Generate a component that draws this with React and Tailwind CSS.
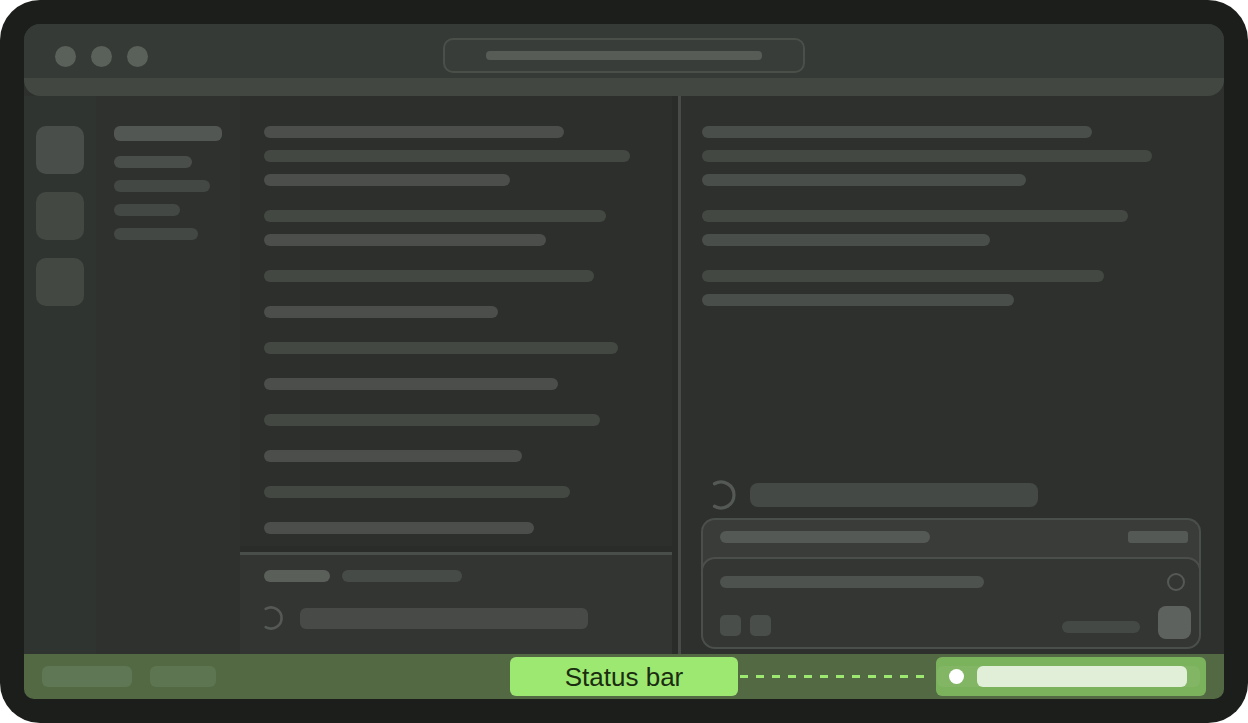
import React from 'react';

// Placeholder text lines in the editor and the preview pane
const editorLines = [
  { w: 'w-[300px]', c: 'bg-[#4b4e4b]', mt: 'mt-0' },
  { w: 'w-[366px]', c: 'bg-[#434843]', mt: 'mt-3' },
  { w: 'w-[246px]', c: 'bg-[#4b4e4b]', mt: 'mt-3' },
  { w: 'w-[342px]', c: 'bg-[#434843]', mt: 'mt-6' },
  { w: 'w-[282px]', c: 'bg-[#4b4e4b]', mt: 'mt-3' },
  { w: 'w-[330px]', c: 'bg-[#434843]', mt: 'mt-6' },
  { w: 'w-[234px]', c: 'bg-[#4b4e4b]', mt: 'mt-6' },
  { w: 'w-[354px]', c: 'bg-[#434843]', mt: 'mt-6' },
  { w: 'w-[294px]', c: 'bg-[#4b4e4b]', mt: 'mt-6' },
  { w: 'w-[336px]', c: 'bg-[#434843]', mt: 'mt-6' },
  { w: 'w-[258px]', c: 'bg-[#4b4e4b]', mt: 'mt-6' },
  { w: 'w-[306px]', c: 'bg-[#434843]', mt: 'mt-6' },
  { w: 'w-[270px]', c: 'bg-[#4b4e4b]', mt: 'mt-6' },
];

const previewLines = [
  { w: 'w-[390px]', c: 'bg-[#4a4e4a]', mt: 'mt-0' },
  { w: 'w-[450px]', c: 'bg-[#434843]', mt: 'mt-3' },
  { w: 'w-[324px]', c: 'bg-[#4a4e4a]', mt: 'mt-3' },
  { w: 'w-[426px]', c: 'bg-[#434843]', mt: 'mt-6' },
  { w: 'w-[288px]', c: 'bg-[#4a4e4a]', mt: 'mt-3' },
  { w: 'w-[402px]', c: 'bg-[#434843]', mt: 'mt-6' },
  { w: 'w-[312px]', c: 'bg-[#4a4e4a]', mt: 'mt-3' },
];

const sidebarItems = [
  { w: 'w-[78px]', c: 'bg-[#4a4e4a]' },
  { w: 'w-[96px]', c: 'bg-[#444844]' },
  { w: 'w-[66px]', c: 'bg-[#444844]' },
  { w: 'w-[84px]', c: 'bg-[#444844]' },
];

function Spinner({ size }) {
  return (
    <svg width={size} height={size} viewBox="0 0 32 32" fill="none" className="shrink-0">
      <path
        d="M9.5 4.74 A13 13 0 1 1 9.5 27.26"
        stroke="#555955"
        strokeWidth="3.2"
        strokeLinecap="round"
      />
    </svg>
  );
}

export default function App() {
  return (
    <div className="w-full h-screen bg-white" style={{ fontFamily: '"Liberation Sans", Arial, sans-serif' }}>
      <div className="w-[1248px] h-[723px] rounded-[40px] bg-[#1c1e1b] p-6">
        <div className="w-[1200px] h-[675px] flex flex-col rounded-t-2xl rounded-b-[10px] overflow-hidden bg-[#2e302d]">
          {/* Title bar */}
          <div className="h-[54px] shrink-0 bg-[#363a36] grid grid-cols-[1fr_auto_1fr]">
            <div className="flex gap-[15px] pl-[31px] pt-[22px]">
              <span className="w-[21px] h-[21px] rounded-full bg-[#5a605a]" />
              <span className="w-[21px] h-[21px] rounded-full bg-[#5a605a]" />
              <span className="w-[21px] h-[21px] rounded-full bg-[#5a605a]" />
            </div>
            <div className="pt-[14px]">
              <div className="w-[362px] h-[35px] rounded-[10px] border-2 border-[#4a4f4a] bg-[#393d39] flex items-center justify-center">
                <div className="w-[276px] h-[9px] rounded bg-[#575c57]" />
              </div>
            </div>
            <div />
          </div>
          <div className="h-[18px] shrink-0 bg-[#424742] rounded-b-2xl" />

          {/* Body */}
          <div className="flex-1 flex min-h-0">
            {/* Activity bar */}
            <div className="w-[72px] shrink-0 bg-[#303431] flex flex-col items-center gap-[18px] pt-[30px]">
              <div className="w-12 h-12 rounded-[10px] bg-[#4a4e4a]" />
              <div className="w-12 h-12 rounded-[10px] bg-[#434843]" />
              <div className="w-12 h-12 rounded-[10px] bg-[#434843]" />
            </div>

            {/* Sidebar */}
            <div className="w-[144px] shrink-0 bg-[#2f312e] pl-[18px] pt-[30px] flex flex-col">
              <div className="w-[108px] h-[15px] rounded-md bg-[#535753]" />
              <div className="flex flex-col gap-3 mt-[15px]">
                {sidebarItems.map((s, i) => (
                  <div key={i} className={`h-3 rounded-full ${s.w} ${s.c}`} />
                ))}
              </div>
            </div>

            {/* Editor column */}
            <div className="w-[432px] shrink-0 flex flex-col">
              <div className="h-[450px] shrink-0 bg-[#2d2f2c] pl-6 pt-[30px] flex flex-col">
                {editorLines.map((l, i) => (
                  <div key={i} className={`h-3 rounded-full shrink-0 ${l.w} ${l.c} ${l.mt}`} />
                ))}
              </div>
              <div className="h-[6px] shrink-0 bg-[#2a2c29]" />
              <div className="h-[3px] shrink-0 bg-[#4a4e4a]" />
              <div className="flex-1 bg-[#333532] pl-6 pt-[15px]">
                <div className="flex gap-3">
                  <div className="w-[66px] h-3 rounded-full bg-[#5a5f5a]" />
                  <div className="w-[120px] h-3 rounded-full bg-[#474b47]" />
                </div>
                <div className="flex items-center gap-4 mt-[23px] -ml-[6px]">
                  <Spinner size={26} />
                  <div className="w-[288px] h-[21px] rounded-md bg-[#474a47]" />
                </div>
              </div>
            </div>
            <div className="w-[6px] shrink-0 bg-[#2a2c29]" />
            <div className="w-[3px] shrink-0 bg-[#484b48]" />

            {/* Preview pane */}
            <div className="flex-1 bg-[#2e302d] flex flex-col pl-[21px] pr-[23px] pt-[30px] pb-[5px]">
              <div className="flex flex-col">
                {previewLines.map((l, i) => (
                  <div key={i} className={`h-3 rounded-full shrink-0 ${l.w} ${l.c} ${l.mt}`} />
                ))}
              </div>

              <div className="mt-auto -ml-px">
                <div className="flex items-center gap-[13px] pl-[4px]">
                  <Spinner size={32} />
                  <div className="w-[288px] h-6 rounded-lg bg-[#454945]" />
                </div>

                {/* Stacked cards */}
                <div className="mt-[7px] flex flex-col">
                  <div className="h-[60px] rounded-t-[14px] border-2 border-b-0 border-[#4b4f4b] bg-[#3a3c39] flex justify-between pl-[17px] pr-[11px] pt-[11px]">
                    <div className="w-[210px] h-3 rounded-full bg-[#555955]" />
                    <div className="w-[60px] h-3 rounded-[3px] bg-[#555955]" />
                  </div>
                  <div className="-mt-[21px] h-[92px] rounded-[14px] border-2 border-[#4b4f4b] bg-[#343633] flex flex-col pl-[17px] pr-[8px] pt-[14px]">
                    <div className="flex items-center justify-between pr-[6px] h-[18px]">
                      <div className="w-[264px] h-3 rounded-full bg-[#4e524e]" />
                      <div className="w-[18px] h-[18px] rounded-full border-2 border-[#555955]" />
                    </div>
                    <div className="flex items-end mt-[15px]">
                      <div className="flex gap-[9px] mb-[3px]">
                        <div className="w-[21px] h-[21px] rounded-[5px] bg-[#4a4e4a]" />
                        <div className="w-[21px] h-[21px] rounded-[5px] bg-[#4a4e4a]" />
                      </div>
                      <div className="ml-auto w-[78px] h-3 rounded-full bg-[#454945] mb-[6px]" />
                      <div className="ml-[18px] w-[33px] h-[33px] rounded-lg bg-[#5e625e]" />
                    </div>
                  </div>
                </div>
              </div>
            </div>
          </div>

          {/* Status bar */}
          <div className="h-[45px] shrink-0 bg-[#526944] flex items-center pl-[18px] pr-[18px]">
            <div className="w-[90px] h-[21px] rounded-md bg-[#5f7754]" />
            <div className="ml-[18px] w-[66px] h-[21px] rounded-md bg-[#5d7551]" />
            <div className="ml-auto flex items-center">
              <div className="w-[228px] h-[39px] rounded-md bg-[#9de870] flex items-center justify-center text-[26px] leading-none text-[#1b2d10]">
                Status bar
              </div>
              <div className="w-[198px] pr-[9px]">
                <div className="h-[3px] bg-[repeating-linear-gradient(90deg,transparent_0_2px,#9de870_2px_10px,transparent_10px_16px)]" />
              </div>
              <div className="w-[270px] h-[39px] rounded-md bg-[#7bb25c] flex items-center pl-[1px] pr-[6px]">
                <div className="flex-1 h-[21px] rounded-md bg-[#82b664] flex items-center pl-[12px] pr-[12px]">
                  <div className="w-[15px] h-[15px] rounded-full bg-white" />
                  <div className="ml-[13px] w-[210px] h-[21px] rounded-md bg-[#e1efd9]" />
                </div>
              </div>
            </div>
          </div>
        </div>
      </div>
    </div>
  );
}
